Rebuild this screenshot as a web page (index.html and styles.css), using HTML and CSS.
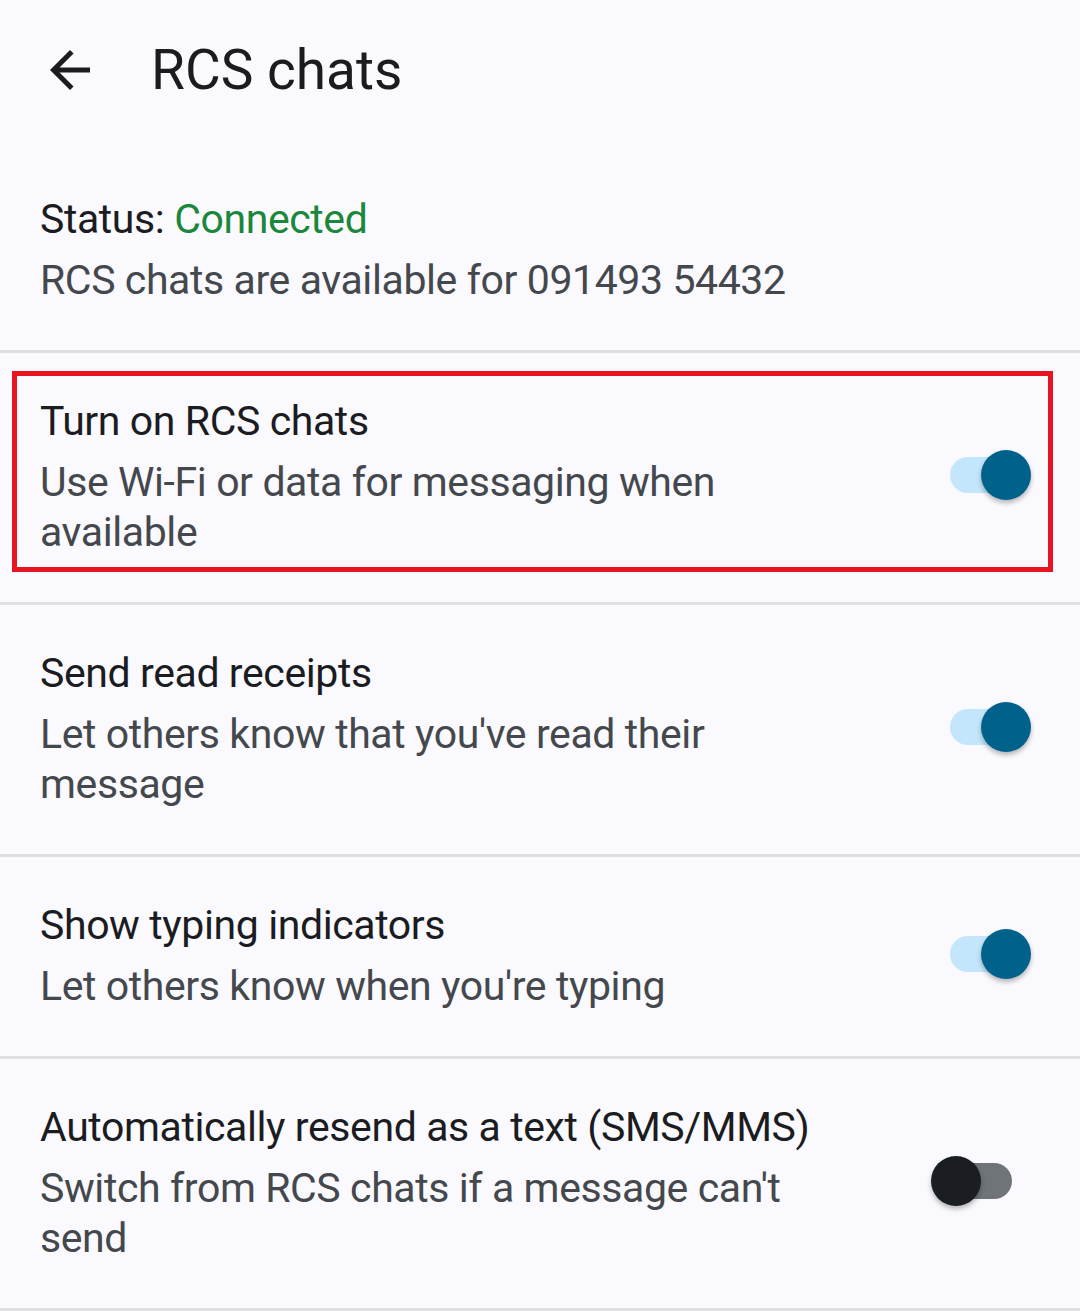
FILE: index.html
```html
<!DOCTYPE html>
<html lang="en">
<head>
<meta charset="utf-8">
<title>RCS chats</title>
<link rel="stylesheet" href="styles.css">
</head>
<body>
<div class="screen">
  <header class="topbar">
    <svg class="back" viewBox="0 0 24 24" width="60" height="60" aria-hidden="true">
      <path d="M20 11H7.83l5.59-5.59L12 4l-8 8 8 8 1.41-1.41L7.83 13H20v-2z" fill="#1b1c1f"/>
    </svg>
    <h1 class="title">RCS chats</h1>
  </header>

  <section class="status">
    <div class="line-title">Status: <span class="ok">Connected</span></div>
    <div class="line-sub">RCS chats are available for 091493 54432</div>
  </section>

  <div class="row highlighted">
    <div class="text">
      <div class="line-title">Turn on RCS chats</div>
      <div class="line-sub">Use Wi-Fi or data for messaging when available</div>
    </div>
    <div class="switch on"><span class="thumb"></span></div>
    <div class="mark"></div>
  </div>

  <div class="row">
    <div class="text">
      <div class="line-title">Send read receipts</div>
      <div class="line-sub">Let others know that you've read their message</div>
    </div>
    <div class="switch on"><span class="thumb"></span></div>
  </div>

  <div class="row">
    <div class="text">
      <div class="line-title">Show typing indicators</div>
      <div class="line-sub">Let others know when you're typing</div>
    </div>
    <div class="switch on"><span class="thumb"></span></div>
  </div>

  <div class="row">
    <div class="text">
      <div class="line-title">Automatically resend as a text (SMS/MMS)</div>
      <div class="line-sub">Switch from RCS chats if a message can't send</div>
    </div>
    <div class="switch off"><span class="thumb"></span></div>
  </div>
</div>
</body>
</html>
```

FILE: styles.css
```css
html, body {
  margin: 0;
  padding: 0;
  background: #f9f9fe;
}

body {
  font-family: Roboto, "Noto Sans", "Liberation Sans", sans-serif;
  color: #1b1c1f;
}

.screen {
  width: 1080px;
  height: 1311px;
  overflow: hidden;
}

.topbar {
  height: 140px;
  display: flex;
  align-items: center;
  padding-left: 40px;
}

.back {
  display: block;
  flex: none;
}

.title {
  margin: 0 0 0 51px;
  font-size: 55px;
  font-weight: 400;
  line-height: 60px;
  color: #1b1c1f;
}

.status {
  padding: 51px 41px 45px 40px;
  border-bottom: 3px solid #dfdfe3;
}

.line-title {
  font-size: 41px;
  letter-spacing: -0.4px;
  line-height: 56px;
  color: #1b1c1f;
  margin-bottom: 8px;
  white-space: nowrap;
}

.line-sub {
  font-size: 41px;
  letter-spacing: -0.4px;
  line-height: 50px;
  color: #44484c;
}

.ok {
  color: #1a873a;
}

.row {
  position: relative;
  display: flex;
  align-items: center;
  padding: 40px 68px 45px 40px;
  border-bottom: 3px solid #dfdfe3;
}

.text {
  width: 820px;
  flex: none;
}

.switch {
  position: relative;
  width: 62px;
  height: 36px;
  border-radius: 18px;
  margin-left: auto;
  flex: none;
}

.switch.on {
  background: #c4e6fc;
}

.switch.off {
  background: #6f7479;
}

.thumb {
  position: absolute;
  top: 50%;
  width: 50px;
  height: 50px;
  margin-top: -25px;
  border-radius: 50%;
  box-shadow: 0 3px 5px rgba(0, 0, 0, 0.28);
}

.switch.on .thumb {
  left: 31px;
  background: #00628a;
}

.switch.off .thumb {
  left: -19px;
  background: #1a1d21;
}

.mark {
  position: absolute;
  left: 12px;
  top: 18px;
  right: 27px;
  bottom: 30px;
  border: 5px solid #e8141f;
  pointer-events: none;
}
```
